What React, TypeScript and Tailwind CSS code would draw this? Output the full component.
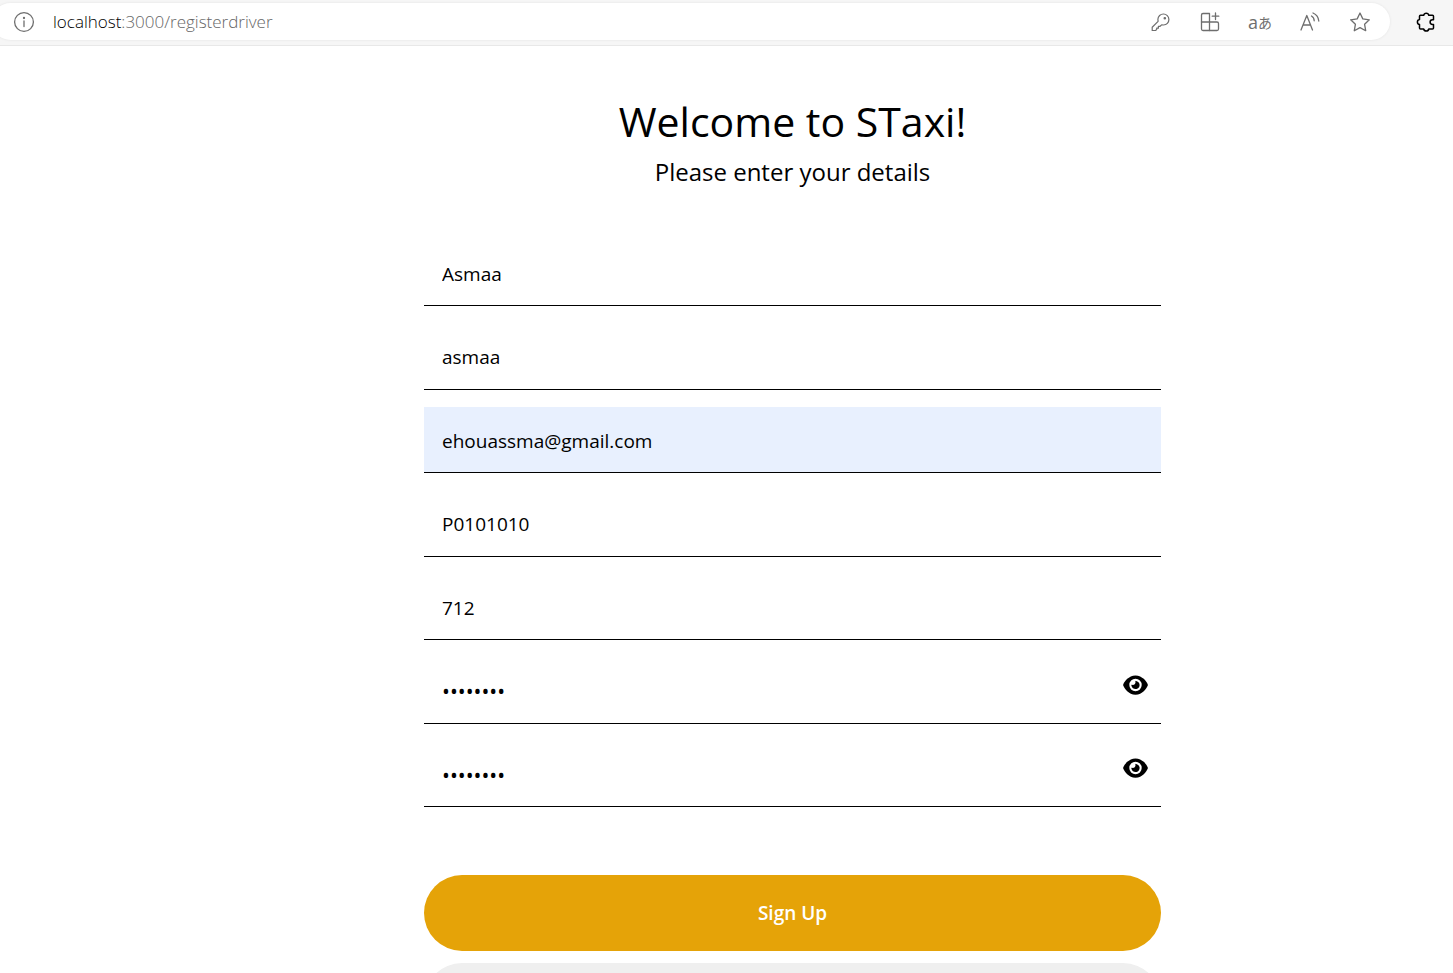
import { useState } from 'react';
import { FaEye } from 'react-icons/fa6';

const textFields = [
  { id: 'firstName', label: 'First name', type: 'text', value: 'Asmaa', tone: 'bg-white' },
  { id: 'lastName', label: 'Last name', type: 'text', value: 'asmaa', tone: 'bg-white' },
  { id: 'email', label: 'Email', type: 'email', value: 'ehouassma@gmail.com', tone: 'bg-[#e8f0fe]' },
  { id: 'licence', label: 'Licence', type: 'text', value: 'P0101010', tone: 'bg-white' },
  { id: 'number', label: 'Taxi number', type: 'text', value: '712', tone: 'bg-white' },
];

const iconProps = {
  viewBox: '0 0 24 24',
  fill: 'none',
  stroke: 'currentColor',
  strokeLinecap: 'round' as const,
  strokeLinejoin: 'round' as const,
  'aria-hidden': true,
};

function InfoIcon() {
  return (
    <svg {...iconProps} strokeWidth="1.3" className="size-6">
      <circle cx="12" cy="12" r="9.4" />
      <path d="M12 11v5.6" />
      <circle cx="12" cy="8" r=".5" fill="currentColor" />
    </svg>
  );
}

function KeyIcon() {
  return (
    <svg {...iconProps} strokeWidth="1.2" className="size-6">
      <path d="M9.900 9.300a5.500 5.500 0 1 1 5.700 5.700l-2-.1-1.500 1.400h-1.700v1.900H8.700v1.200l-1.100 1.100H4.200v-3.300l5.900-5.800z" />
      <circle cx="16.800" cy="8.200" r=".7" fill="currentColor" />
    </svg>
  );
}

function AppsIcon() {
  return (
    <svg {...iconProps} strokeWidth="1.3" className="size-6">
      <path d="M5 3.500h6.500v17H5A1.500 1.500 0 0 1 3.500 19V5A1.500 1.500 0 0 1 5 3.500z" />
      <path d="M3.500 12H19a1.500 1.500 0 0 1 1.500 1.500V19a1.500 1.500 0 0 1-1.500 1.500h-7.500M17.500 3v6.500M14.200 6.200h6.600" />
    </svg>
  );
}

function ReadAloudIcon() {
  return (
    <svg {...iconProps} strokeWidth="1.3" className="size-6">
      <path d="M3 20 8.800 5.500l5.700 14.500M5 15h7.600M13.500 6c1.700 1 2.700 2.800 2.700 4.800M15 3c3.500 1.500 5.500 4.500 5.800 8" />
    </svg>
  );
}

function StarIcon() {
  return (
    <svg {...iconProps} strokeWidth="1.3" className="size-6">
      <path d="m12 3 2.800 5.900 6.500.9-4.700 4.500 1.100 6.400L12 17.600l-5.700 3.100 1.100-6.400-4.700-4.500 6.500-.9z" />
    </svg>
  );
}

function PuzzleIcon() {
  return (
    <svg {...iconProps} strokeWidth="1.5" className="size-6">
      <path d="M6.500 5.300h3.200a2.600 2.600 0 0 1 5.100 0H18.500a1 1 0 0 1 1 1v3.400h-1a2.400 2.400 0 0 0 0 4.800h1v3.500a1 1 0 0 1-1 1h-3.700a2.600 2.600 0 0 1-5.100 0H6.500a1 1 0 0 1-1-1v-3.400a2.600 2.600 0 0 1 0-5.100V6.300a1 1 0 0 1 1-1z" />
    </svg>
  );
}

function AddressBar() {
  return (
    <header className="flex items-start border-b border-[#e8e8e8] bg-[#f6f6f6] pt-[3px] pb-[5px]">
      <div className="-ml-2 flex h-[37px] flex-1 items-center rounded-full bg-white pr-[18px] pl-5 text-[#6e6e6e] shadow-[0_0_3px_rgba(0,0,0,0.08)]">
        <button type="button" aria-label="Site information">
          <InfoIcon />
        </button>
        <a href="#registerdriver" className="ml-[17px] flex-1 text-[17px] font-light text-[#666666]">
          <span className="text-black">localhost</span>:3000/registerdriver
        </a>
        <div className="flex items-center gap-[26px]">
          <button type="button" aria-label="Passwords"><KeyIcon /></button>
          <button type="button" aria-label="Apps"><AppsIcon /></button>
          <button type="button" aria-label="Translate" className="flex w-6 justify-center text-lg leading-6">
            <span>a</span>
            <span className="font-['Noto_Sans_CJK_JP',sans-serif] text-sm leading-6">あ</span>
          </button>
          <button type="button" aria-label="Read aloud"><ReadAloudIcon /></button>
          <button type="button" aria-label="Add to favourites"><StarIcon /></button>
        </div>
      </div>
      <button type="button" aria-label="Extensions" className="mr-[15px] ml-6 flex h-[37px] items-center text-black">
        <PuzzleIcon />
      </button>
    </header>
  );
}

function PasswordField({ id, label }: { id: string; label: string }) {
  const [visible, setVisible] = useState(false);
  return (
    <div className="relative">
      <input
        id={id}
        aria-label={label}
        type={visible ? 'text' : 'password'}
        defaultValue="abcd1234"
        className="block h-[66px] w-full border-b border-black bg-white pt-0.5 pr-14 pl-[18px] text-[21px] outline-none"
      />
      <button
        type="button"
        aria-label="Show password"
        onClick={() => setVisible(!visible)}
        className="absolute top-4 right-[13px]"
      >
        <FaEye className="h-[22px] w-[25px]" />
      </button>
    </div>
  );
}

export default function App() {
  return (
    <div className="h-screen overflow-hidden bg-white font-['Open_Sans','Noto_Sans_CJK_JP',sans-serif] text-black">
      <AddressBar />
      <main className="pl-[132px]">
        <form className="mx-auto max-w-[737px]" onSubmit={(e) => e.preventDefault()}>
          <div className="pt-[43px] text-center">
            <h1 className="text-[41px] leading-[64px]">Welcome to STaxi!</h1>
            <p className="text-2xl leading-[38px]">Please enter your details</p>
          </div>
          <div className="mt-[49px] flex min-h-[567px] flex-col justify-between">
            {textFields.map((f) => (
              <input
                key={f.id}
                id={f.id}
                aria-label={f.label}
                type={f.type}
                defaultValue={f.value}
                className={`block h-[66px] w-full border-b border-black pt-0.5 pr-4 pl-[18px] text-[19px] outline-none ${f.tone}`}
              />
            ))}
            <PasswordField id="password" label="Password" />
            <PasswordField id="confirm" label="Confirm password" />
          </div>
          <div className="mt-[68px] flex flex-col gap-3">
            <button type="submit" className="h-[76px] rounded-full bg-[#e5a308] text-[19px] font-semibold text-white">
              Sign Up
            </button>
            <button type="button" aria-label="Cancel" className="h-[76px] rounded-full bg-[#efefef]" />
          </div>
        </form>
      </main>
    </div>
  );
}
